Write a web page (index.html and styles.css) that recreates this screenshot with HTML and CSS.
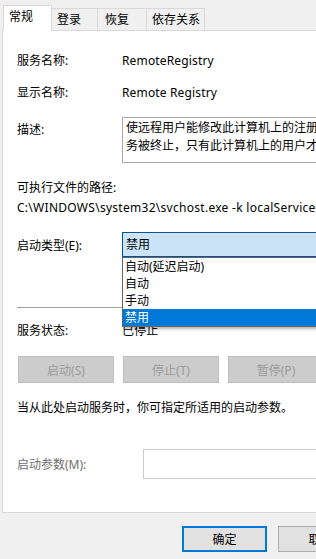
FILE: index.html
```html
<!DOCTYPE html>
<html lang="zh-CN">
<head>
    <meta charset="UTF-8">
    <title>Remote Registry 的属性</title>
    <link rel="stylesheet" href="styles.css">
</head>
<body>
<div class="dialog">

    <!-- Tabs -->
    <div class="tabs">
        <div class="tab active">常规</div>
        <div class="tab">登录</div>
        <div class="tab">恢复</div>
        <div class="tab wide">依存关系</div>
    </div>

    <!-- General page -->
    <div class="panel">
        <div class="row r-name">
            <span class="label">服务名称:</span>
            <span class="value">RemoteRegistry</span>
        </div>
        <div class="row r-display">
            <span class="label">显示名称:</span>
            <span class="value">Remote Registry</span>
        </div>
        <div class="row r-desc">
            <span class="label">描述:</span>
            <div class="desc">
                <div class="desc-text">使远程用户能修改此计算机上的注册表设置。如果此服务被终止，只有此计算机上的用户才能修改注册表。如果此服务被禁用，任何依赖它的服务将无法启动。</div>
            </div>
        </div>
        <div class="path-label">可执行文件的路径:</div>
        <div class="path">C:\WINDOWS\system32\svchost.exe -k localService</div>

        <div class="row r-type">
            <span class="label">启动类型(E):</span>
            <div class="combo">
                禁用
                <div class="combo-list">
                    <div class="list-item">自动(延迟启动)</div>
                    <div class="list-item">自动</div>
                    <div class="list-item">手动</div>
                    <div class="list-item selected">禁用</div>
                </div>
            </div>
        </div>

        <div class="sep"></div>

        <div class="row r-status">
            <span class="label">服务状态:</span>
            <span class="value">已停止</span>
        </div>
        <div class="actions">
            <button class="btn-off">启动(S)</button>
            <button class="btn-off">停止(T)</button>
            <button class="btn-off">暂停(P)</button>
            <button class="btn-off">恢复(R)</button>
        </div>
        <div class="note">当从此处启动服务时，你可指定所适用的启动参数。</div>
        <div class="row r-param">
            <span class="label label-off">启动参数(M):</span>
            <div class="input"></div>
        </div>
    </div>

    <!-- Dialog buttons -->
    <div class="footer">
        <button class="btn default">确定</button>
        <button class="btn">取消</button>
        <button class="btn">应用(A)</button>
    </div>
</div>
</body>
</html>
```

FILE: styles.css
```css
* {
    box-sizing: border-box;
}
html, body {
    margin: 0;
}
body {
    width: 316px;
    height: 559px;
    overflow: hidden;
    background: #f0f0f0;
    color: #000;
    font-family: "Noto Sans", "Noto Sans CJK SC", sans-serif;
    font-size: 12px;
}
.dialog {
    width: 480px;
}

/* tabs */
.tabs {
    display: flex;
    align-items: flex-end;
    height: 30px;
    padding-left: 3px;
    position: relative;
    z-index: 1;
}
.tab {
    width: 46px;
    height: 22px;
    padding: 3px 0 0 5px;
    line-height: 16px;
    background: #f0f0f0;
    border-top: 1px solid #d9d9d9;
    border-right: 1px solid #d9d9d9;
}
.tab.active {
    width: 49px;
    height: 26px;
    margin-bottom: -1px;
    border-left: 1px solid #d9d9d9;
    background: #fff;
}
.tab:nth-child(3) { width: 49px; padding-left: 7px; }
.tab.wide { width: 58px; }

/* page */
.panel {
    position: relative;
    height: 483px;
    margin-left: 2px;
    padding-left: 14px;
    background: #fff;
    border: 1px solid #d9d9d9;
}
.row {
    display: flex;
    align-items: center;
    height: 20px;
}
.label {
    width: 105px;
    flex: none;
}
.value {
    letter-spacing: 0.15px;
}
.r-name { margin-top: 19px; }
.r-display { margin-top: 12px; }
.r-desc {
    margin-top: 15px;
    height: auto;
    align-items: flex-start;
}
.r-desc .label {
    padding-top: 3px;
    line-height: 20px;
}
.desc {
    width: 320px;
    height: 46px;
    padding: 1px 0 0 3px;
    border: 1px solid #a9a9a9;
}
.desc-text {
    width: 292px;
    height: 36px;
    overflow: hidden;
    line-height: 18px;
}
.path-label {
    margin-top: 15px;
    line-height: 20px;
}
.path {
    line-height: 20px;
    white-space: nowrap;
    letter-spacing: 0.28px;
}

/* startup type combo */
.r-type {
    margin-top: 14px;
    height: 25px;
}
.combo {
    position: relative;
    width: 330px;
    height: 25px;
    padding-left: 3px;
    line-height: 23px;
    background: #cce4f7;
    border: 1px solid #005499;
}
.combo-list {
    position: absolute;
    top: 24px;
    left: -1px;
    width: 330px;
    background: #fff;
    border: 1px solid #646464;
    box-shadow: 2px 2px 3px rgba(0, 0, 0, 0.3);
    z-index: 2;
}
.list-item {
    height: 17px;
    padding-left: 2px;
    line-height: 17px;
}
.list-item.selected {
    background: #0078d7;
    color: #fff;
}

.sep {
    margin-top: 50px;
    height: 1px;
    background: #a0a0a0;
}
.r-status { margin-top: 12px; }

.actions {
    display: flex;
    gap: 9px;
    margin-top: 16px;
    margin-left: 1px;
}
.btn-off {
    flex: none;
    width: 96px;
    height: 27px;
    padding: 0;
    font: inherit;
    color: #9b9b9b;
    background: #ccc;
    border: 1px solid #bfbfbf;
}
.note {
    margin-top: 15px;
    line-height: 20px;
}
.r-param {
    margin-top: 31px;
    height: 30px;
}
.r-param .label { width: 126px; }
.label-off { color: #6d6d6d; }
.input {
    width: 300px;
    height: 30px;
    background: #fff;
    border: 1px solid #ccc;
}

/* footer */
.footer {
    display: flex;
    gap: 11px;
    padding: 13px 0 0 182px;
}
.btn {
    flex: none;
    width: 85px;
    height: 26px;
    padding: 0;
    font: inherit;
    color: #000;
    background: #e1e1e1;
    border: 1px solid #adadad;
}
.btn.default {
    border: 2px solid #0078d7;
}
```
